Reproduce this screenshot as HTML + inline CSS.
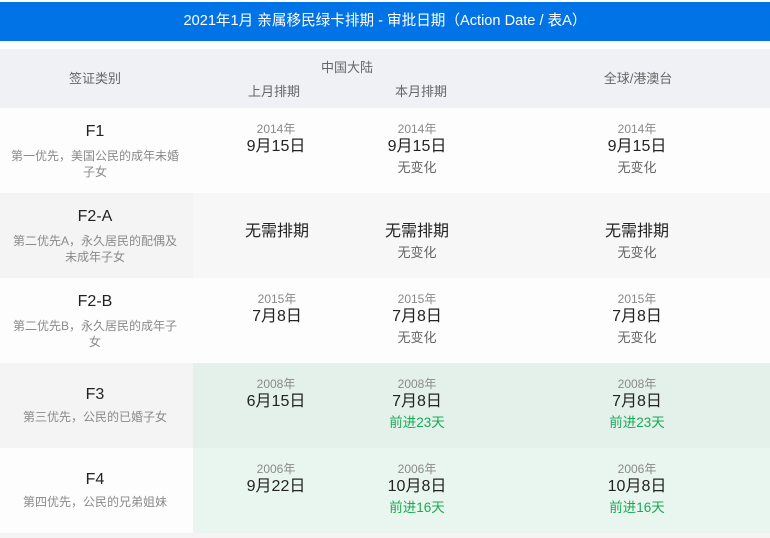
<!DOCTYPE html>
<html><head><meta charset="utf-8"><style>
*{margin:0;padding:0;box-sizing:border-box}
body{width:770px;height:538px;position:relative;overflow:hidden;background:#fff;font-family:"Liberation Sans","Noto Sans CJK SC",sans-serif}
.b{position:absolute}
.t{position:absolute;width:200px;margin-left:-100px;text-align:center;line-height:20px;white-space:nowrap;margin-top:2px}
.y{font-size:12px;color:#8a8a8a}
.d{font-size:16px;color:#222}
.n{font-size:13px;color:#666}
.g{font-size:13.5px;color:#1aaa55}
.h{font-size:13px;color:#666}
.c{font-size:16px;color:#222}
.s{font-size:12px;color:#8a8a8a;width:170px;margin-left:-85px;white-space:normal;line-height:16px}
</style></head><body>
<div class="b" style="left:0;top:2px;width:770px;height:39px;background:#0073e6"></div>
<div class="t" style="left:385px;top:9px;width:600px;margin-left:-300px;color:#fff;font-size:14.6px">2021年1月 亲属移民绿卡排期 - 审批日期（Action Date / 表A）</div>
<div class="b" style="left:0;top:49px;width:770px;height:59px;background:#f0f1f5"></div>
<div class="t h" style="left:95px;top:67px">签证类别</div>
<div class="t h" style="left:347px;top:56px">中国大陆</div>
<div class="t h" style="left:274px;top:80px">上月排期</div>
<div class="t h" style="left:421px;top:80px">本月排期</div>
<div class="t h" style="left:638px;top:67px">全球/港澳台</div>

<div class="b" style="left:0;top:108px;width:770px;height:85px;background:#fdfdfd"></div>
<div class="b" style="left:0;top:193px;width:770px;height:85px;background:#f7f7f7"></div>
<div class="b" style="left:0;top:193px;width:193px;height:85px;background:#f4f4f4"></div>
<div class="b" style="left:0;top:278px;width:770px;height:85px;background:#fdfdfd"></div>
<div class="b" style="left:0;top:363px;width:193px;height:85px;background:#f4f4f4"></div>
<div class="b" style="left:193px;top:363px;width:577px;height:85px;background:#e3f1ea"></div>
<div class="b" style="left:0;top:448px;width:193px;height:85px;background:#fdfdfd"></div>
<div class="b" style="left:193px;top:448px;width:577px;height:85px;background:#e9f6ef"></div>
<div class="b" style="left:0;top:533px;width:770px;height:5px;background:#f4f4f4"></div>

<!-- F1 -->
<div class="t c" style="left:95px;top:120px">F1</div>
<div class="t s" style="left:95px;top:146px">第一优先，美国公民的成年未婚子女</div>
<div class="t y" style="left:276px;top:117px">2014年</div><div class="t d" style="left:276px;top:135px">9月15日</div>
<div class="t y" style="left:417px;top:117px">2014年</div><div class="t d" style="left:417px;top:135px">9月15日</div><div class="t n" style="left:417px;top:156px">无变化</div>
<div class="t y" style="left:637px;top:117px">2014年</div><div class="t d" style="left:637px;top:135px">9月15日</div><div class="t n" style="left:637px;top:156px">无变化</div>

<!-- F2-A -->
<div class="t c" style="left:95px;top:205px">F2-A</div>
<div class="t s" style="left:95px;top:231px">第二优先A，永久居民的配偶及未成年子女</div>
<div class="t d" style="left:277px;top:220px">无需排期</div>
<div class="t d" style="left:417px;top:220px">无需排期</div><div class="t n" style="left:417px;top:241px">无变化</div>
<div class="t d" style="left:637px;top:220px">无需排期</div><div class="t n" style="left:637px;top:241px">无变化</div>

<!-- F2-B -->
<div class="t c" style="left:95px;top:290px">F2-B</div>
<div class="t s" style="left:95px;top:316px">第二优先B，永久居民的成年子女</div>
<div class="t y" style="left:277px;top:287px">2015年</div><div class="t d" style="left:277px;top:305px">7月8日</div>
<div class="t y" style="left:417px;top:287px">2015年</div><div class="t d" style="left:417px;top:305px">7月8日</div><div class="t n" style="left:417px;top:326px">无变化</div>
<div class="t y" style="left:637px;top:287px">2015年</div><div class="t d" style="left:637px;top:305px">7月8日</div><div class="t n" style="left:637px;top:326px">无变化</div>

<!-- F3 -->
<div class="t c" style="left:95px;top:383px">F3</div>
<div class="t s" style="left:95px;top:407px">第三优先，公民的已婚子女</div>
<div class="t y" style="left:276px;top:372px">2008年</div><div class="t d" style="left:276px;top:390px">6月15日</div>
<div class="t y" style="left:417px;top:372px">2008年</div><div class="t d" style="left:417px;top:390px">7月8日</div><div class="t g" style="left:417px;top:411px">前进23天</div>
<div class="t y" style="left:637px;top:372px">2008年</div><div class="t d" style="left:637px;top:390px">7月8日</div><div class="t g" style="left:637px;top:411px">前进23天</div>

<!-- F4 -->
<div class="t c" style="left:95px;top:468px">F4</div>
<div class="t s" style="left:95px;top:492px">第四优先，公民的兄弟姐妹</div>
<div class="t y" style="left:276px;top:457px">2006年</div><div class="t d" style="left:276px;top:475px">9月22日</div>
<div class="t y" style="left:417px;top:457px">2006年</div><div class="t d" style="left:417px;top:475px">10月8日</div><div class="t g" style="left:417px;top:496px">前进16天</div>
<div class="t y" style="left:637px;top:457px">2006年</div><div class="t d" style="left:637px;top:475px">10月8日</div><div class="t g" style="left:637px;top:496px">前进16天</div>
</body></html>
